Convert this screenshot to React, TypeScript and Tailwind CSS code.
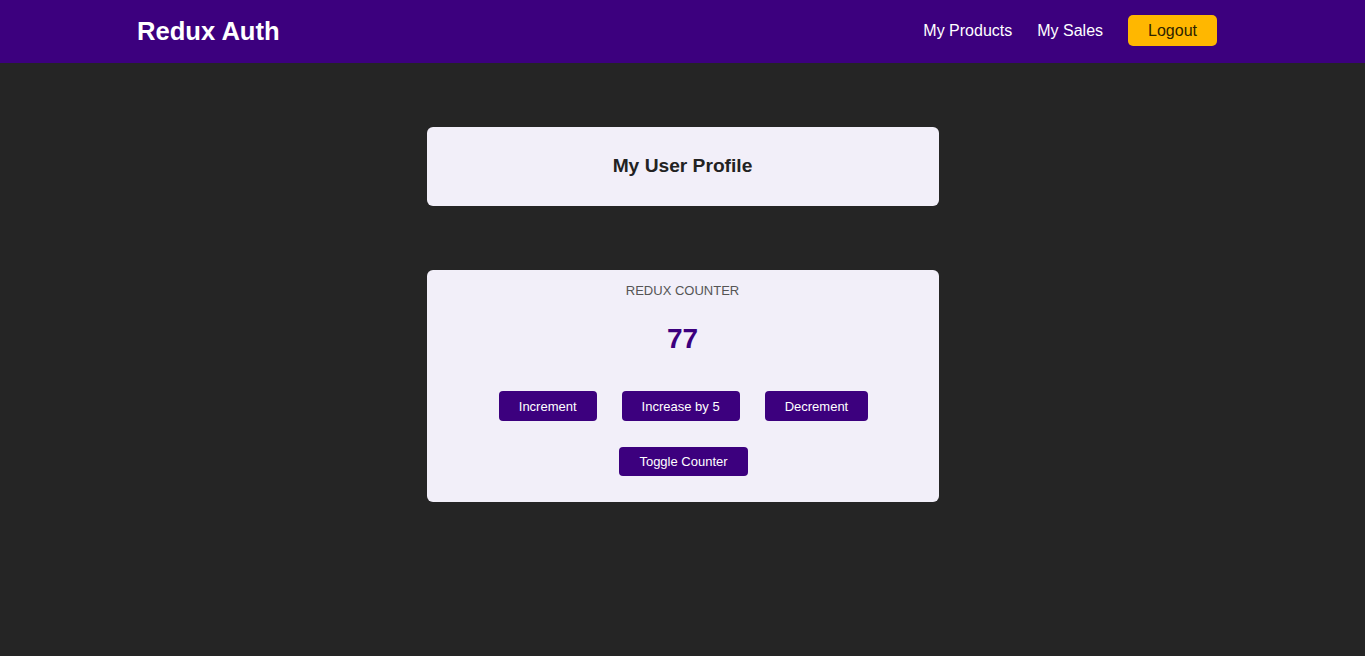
export default function App() {
  return (
    <div className="min-h-screen bg-[#252525] font-['Liberation_Sans',Arial,sans-serif]">
      <header className="flex h-[63px] items-center justify-between bg-[#3c007e] pl-[137px] pr-[148px]">
        <h1 className="text-[25.6px] font-bold leading-none text-white">Redux Auth</h1>
        <nav className="flex items-center gap-[25px]">
          <a className="mb-[2px] text-[16px] text-white">My Products</a>
          <a className="mb-[2px] text-[16px] text-white">My Sales</a>
          <button className="mb-[2px] h-[31px] rounded-[5px] bg-[#ffb700] px-5 text-[16px] text-[#2d2300]">
            Logout
          </button>
        </nav>
      </header>

      <main className="flex flex-col items-center">
        <section className="mt-16 flex h-[79px] w-[512px] items-center justify-center rounded-md bg-[#f2eff9]">
          <h2 className="text-[19.2px] font-bold text-[#222]">My User Profile</h2>
        </section>

        <section className="mt-16 flex w-[512px] flex-col items-center rounded-md bg-[#f2eff9] pt-[13px] pb-[26px]">
          <h3 className="text-[13px] leading-4 text-[#555]">REDUX COUNTER</h3>
          <div className="mt-6 text-[28px] font-bold leading-8 text-[#3c007e]">77</div>
          <div className="mt-[36px] flex gap-[25px] pl-[2px]">
            <button className="h-[30px] rounded bg-[#3c007e] px-5 pt-[1px] text-[13px] text-white">Increment</button>
            <button className="h-[30px] rounded bg-[#3c007e] px-5 pt-[1px] text-[13px] text-white">Increase by 5</button>
            <button className="h-[30px] rounded bg-[#3c007e] px-5 pt-[1px] text-[13px] text-white">Decrement</button>
          </div>
          <button className="mt-[26px] ml-[2px] h-[29px] rounded bg-[#3c007e] px-5 text-[13px] text-white">
            Toggle Counter
          </button>
        </section>
      </main>
    </div>
  );
}
